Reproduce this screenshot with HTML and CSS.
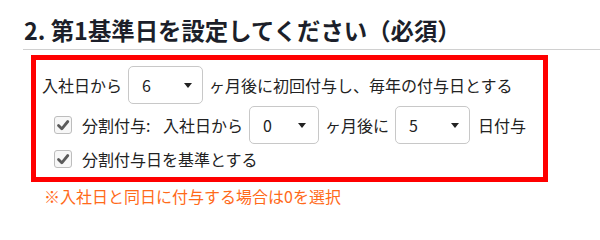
FILE: index.html
```html
<!DOCTYPE html>
<html lang="ja">
<head>
<meta charset="utf-8">
<link rel="stylesheet" href="styles.css">
</head>
<body>
<h2 class="title">2. 第1基準日を設定してください（必須）</h2>
<div class="box">
  <div class="row row-main">
    <span>入社日から</span>
    <span class="sel sel-a"><select><option>6</option></select></span>
    <span class="after-a">ヶ月後に初回付与し、毎年の付与日とする</span>
  </div>
  <div class="row row-sub">
    <span class="chk"><svg viewBox="0 0 18 18" width="18" height="18"><polyline points="4.5,9.5 7.8,12.8 13.8,5.5" fill="none" stroke="#5a5a5a" stroke-width="2.8" stroke-linecap="round" stroke-linejoin="round"/></svg></span>
    <span class="split">分割付与: 入社日から</span>
    <span class="sel sel-b"><select><option>0</option></select></span>
    <span>ヶ月後に</span>
    <span class="sel sel-c"><select><option>5</option></select></span>
    <span class="after-c">日付与</span>
  </div>
  <div class="row row-check">
    <span class="chk"><svg viewBox="0 0 18 18" width="18" height="18"><polyline points="4.5,9.5 7.8,12.8 13.8,5.5" fill="none" stroke="#5a5a5a" stroke-width="2.8" stroke-linecap="round" stroke-linejoin="round"/></svg></span>
    <span>分割付与日を基準とする</span>
  </div>
</div>
<p class="note">※入社日と同日に付与する場合は0を選択</p>
</body>
</html>
```
FILE: styles.css
```css
* { box-sizing: border-box; }
body {
  margin: 0;
  font-family: "Noto Sans CJK JP", "Noto Sans", sans-serif;
  font-size: 16px;
  color: #222;
  background: #fff;
}
.title {
  margin: 15px 0 0 23px;
  padding: 0 0 4px 1px;
  font-size: 23.4px;
  line-height: 30px;
  font-weight: bold;
  color: #1c1f2a;
  border-bottom: 1px solid #d0d0d0;
}
.box {
  margin: 5px 0 0 31px;
  width: 517px;
  height: 127px;
  border: 5px solid #ff0000;
  padding: 6px 0 0 6px;
}
.row {
  display: flex;
  align-items: center;
  white-space: nowrap;
}
.row-main { height: 38px; margin-bottom: 2px; }
.row-sub { height: 38px; padding-left: 12px; }
.row-check { height: 26px; margin-top: 2px; padding-left: 12px; }
.sel {
  position: relative;
  display: inline-block;
  margin: 0 6px;
}
.sel select {
  appearance: none;
  -webkit-appearance: none;
  display: block;
  height: 38px;
  border: 1px solid #c8c8c8;
  border-radius: 5px;
  background: #fff;
  font-family: inherit;
  font-size: 16px;
  color: #222;
  padding: 0 0 0 13px;
}
.sel::after {
  content: "";
  position: absolute;
  right: 11px;
  top: 17px;
  border-left: 4.5px solid transparent;
  border-right: 4.5px solid transparent;
  border-top: 5px solid #222;
  pointer-events: none;
}
.sel-a select { width: 75px; }
.sel-b select { width: 70px; }
.sel-b::after { right: 13px; }
.sel-c select { width: 75px; }
.sel-a { margin-right: 6px; }
.sel-c { margin-right: 8px; }
.chk {
  display: inline-flex;
  width: 18px;
  height: 18px;
  border: 1px solid #bdbdbd;
  border-radius: 3px;
  background: #f7f7f7;
  margin-right: 10px;
}
.chk svg { display: block; margin: -1px; }
.split { word-spacing: 9px; }
.note {
  margin: 2px 0 0 44px;
  line-height: 24px;
  color: #ff6a1a;
}
```
